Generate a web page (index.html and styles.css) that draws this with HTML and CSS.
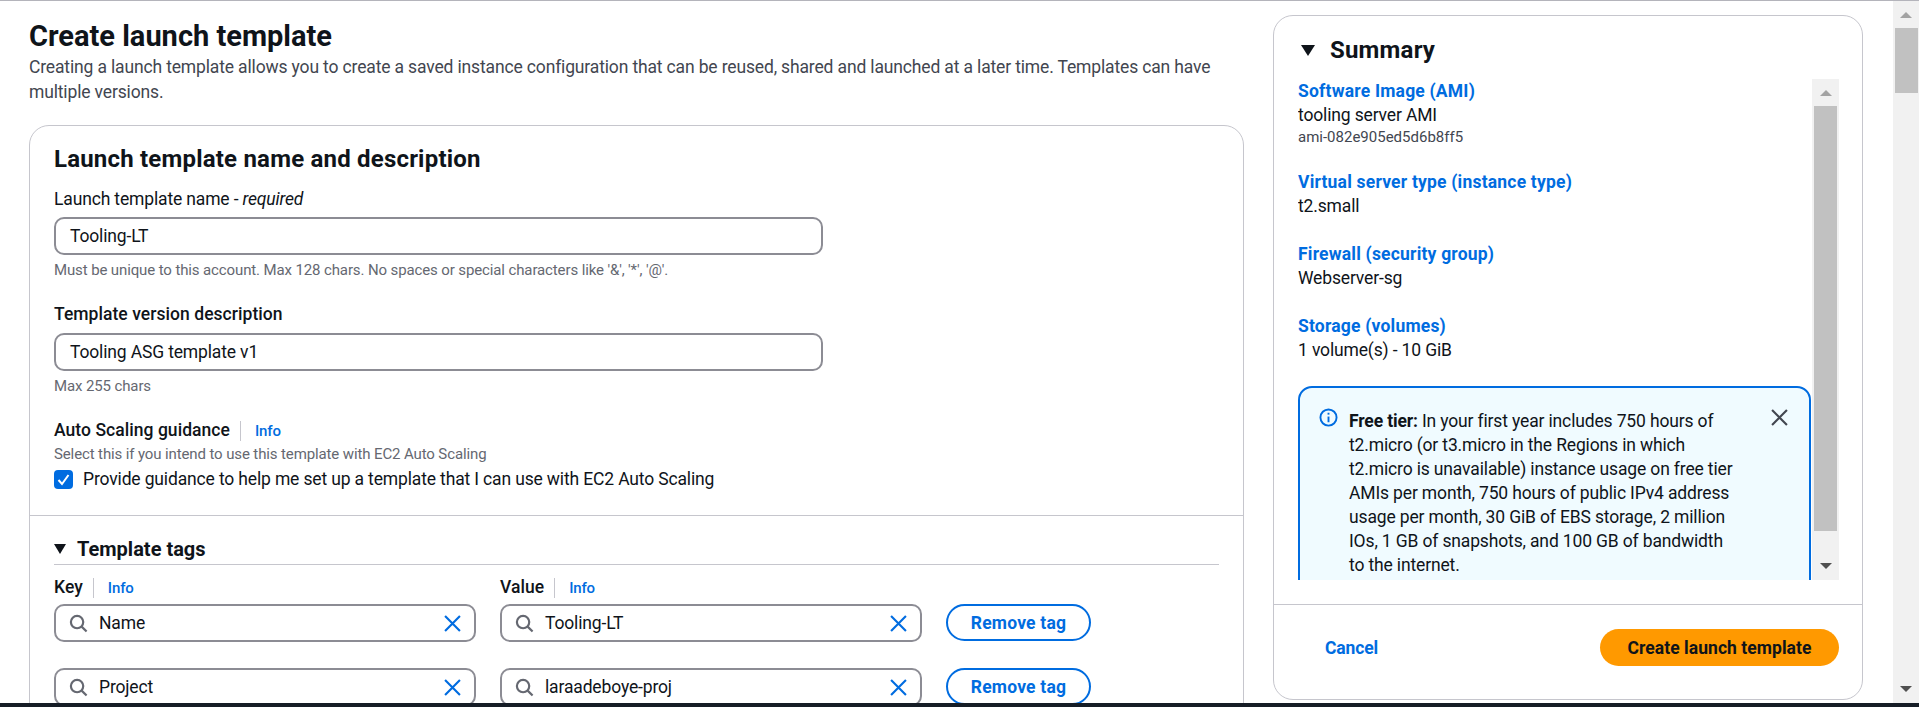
FILE: index.html
```html
<!DOCTYPE html>
<html lang="en">
<head>
  <meta charset="UTF-8">
  <title>Create launch template</title>
  <link rel="stylesheet" href="styles.css">
</head>
<body>
  <div class="viewport">
    <div class="content">
      <div class="main-col">
        <h1>Create launch template</h1>
        <p class="intro">Creating a launch template allows you to create a saved instance configuration that can be reused, shared and launched at a later time. Templates can have<br>multiple versions.</p>

        <div class="card">
          <div class="section">
            <h2>Launch template name and description</h2>
            <div class="label label-first">Launch template name - <i>required</i></div>
            <div class="input input-wide">Tooling-LT</div>
            <div class="hint">Must be unique to this account. Max 128 chars. No spaces or special characters like '&amp;', '*', '@'.</div>

            <div class="label label-strong label-gap">Template version description</div>
            <div class="input input-wide">Tooling ASG template v1</div>
            <div class="hint">Max 255 chars</div>

            <div class="label-row label-gap">
              <span class="label label-strong">Auto Scaling guidance</span>
              <a class="info">Info</a>
            </div>
            <div class="hint hint-tight">Select this if you intend to use this template with EC2 Auto Scaling</div>
            <div class="check-row">
              <svg class="checkbox" viewBox="0 0 19 19"><rect width="19" height="19" rx="4" fill="#006ce0"/><path d="M4.5 10l3.5 4 6.5-9" fill="none" stroke="#fff" stroke-width="2"/></svg>
              <span>Provide guidance to help me set up a template that I can use with EC2 Auto Scaling</span>
            </div>
          </div>

          <div class="section section-tags">
            <div class="tags-head">
              <svg class="caret" viewBox="0 0 12 10"><path d="M0 0h12L6 10z" fill="#0f141a"/></svg>
              <span>Template tags</span>
            </div>
            <div class="tag-grid tag-labels">
              <div class="label-row"><span class="label label-strong">Key</span><a class="info">Info</a></div>
              <div class="label-row"><span class="label label-strong">Value</span><a class="info">Info</a></div>
            </div>
            <div class="tag-grid">
              <div class="input input-search">
                <svg class="icon-search" viewBox="0 0 20 20"><circle cx="8.5" cy="8.5" r="6.5" fill="none" stroke="#656871" stroke-width="2.3"/><path d="M13.3 13.3L18.5 18.5" stroke="#656871" stroke-width="2.3"/></svg>
                <span class="input-text">Name</span>
                <svg class="icon-x" viewBox="0 0 16 16"><path d="M1 1l14 14M15 1L1 15" stroke="#006ce0" stroke-width="2"/></svg>
              </div>
              <div class="input input-search">
                <svg class="icon-search" viewBox="0 0 20 20"><circle cx="8.5" cy="8.5" r="6.5" fill="none" stroke="#656871" stroke-width="2.3"/><path d="M13.3 13.3L18.5 18.5" stroke="#656871" stroke-width="2.3"/></svg>
                <span class="input-text">Tooling-LT</span>
                <svg class="icon-x" viewBox="0 0 16 16"><path d="M1 1l14 14M15 1L1 15" stroke="#006ce0" stroke-width="2"/></svg>
              </div>
              <button class="btn-outline">Remove tag</button>

              <div class="input input-search">
                <svg class="icon-search" viewBox="0 0 20 20"><circle cx="8.5" cy="8.5" r="6.5" fill="none" stroke="#656871" stroke-width="2.3"/><path d="M13.3 13.3L18.5 18.5" stroke="#656871" stroke-width="2.3"/></svg>
                <span class="input-text">Project</span>
                <svg class="icon-x" viewBox="0 0 16 16"><path d="M1 1l14 14M15 1L1 15" stroke="#006ce0" stroke-width="2"/></svg>
              </div>
              <div class="input input-search">
                <svg class="icon-search" viewBox="0 0 20 20"><circle cx="8.5" cy="8.5" r="6.5" fill="none" stroke="#656871" stroke-width="2.3"/><path d="M13.3 13.3L18.5 18.5" stroke="#656871" stroke-width="2.3"/></svg>
                <span class="input-text">laraadeboye-proj</span>
                <svg class="icon-x" viewBox="0 0 16 16"><path d="M1 1l14 14M15 1L1 15" stroke="#006ce0" stroke-width="2"/></svg>
              </div>
              <button class="btn-outline">Remove tag</button>
            </div>
          </div>
        </div>
      </div>

      <aside class="summary">
        <div class="summary-head">
          <svg class="caret caret-big" viewBox="0 0 14 11"><path d="M0 0h14L7 11z" fill="#0f141a"/></svg>
          <span>Summary</span>
        </div>
        <div class="summary-scroll">
          <div class="summary-body">
            <a class="sum-link">Software Image (AMI)</a>
            <div class="sum-value">tooling server AMI</div>
            <div class="sum-id">ami-082e905ed5d6b8ff5</div>

            <a class="sum-link sum-gap-first">Virtual server type (instance type)</a>
            <div class="sum-value">t2.small</div>

            <a class="sum-link sum-gap">Firewall (security group)</a>
            <div class="sum-value">Webserver-sg</div>

            <a class="sum-link sum-gap">Storage (volumes)</a>
            <div class="sum-value">1 volume(s) - 10 GiB</div>

            <div class="alert">
              <svg class="alert-icon" viewBox="0 0 20 20"><circle cx="10" cy="10" r="8.5" fill="none" stroke="#006ce0" stroke-width="2"/><path d="M10 9v6" stroke="#006ce0" stroke-width="2"/><path d="M10 5v2" stroke="#006ce0" stroke-width="2"/></svg>
              <div class="alert-text"><b>Free tier:</b> In your first year includes 750 hours of<br>t2.micro (or t3.micro in the Regions in which<br>t2.micro is unavailable) instance usage on free tier<br>AMIs per month, 750 hours of public IPv4 address<br>usage per month, 30 GiB of EBS storage, 2 million<br>IOs, 1 GB of snapshots, and 100 GB of bandwidth<br>to the internet.</div>
              <svg class="alert-close" viewBox="0 0 16 16"><path d="M1 1l14 14M15 1L1 15" stroke="#424650" stroke-width="2"/></svg>
            </div>
          </div>
          <div class="scrollbar scrollbar-inner">
            <div class="arrow-up"></div>
            <div class="thumb thumb-inner"></div>
            <div class="arrow-down"></div>
          </div>
        </div>
        <div class="summary-foot">
          <a class="cancel">Cancel</a>
          <button class="btn-primary">Create launch template</button>
        </div>
      </aside>
    </div>

    <div class="scrollbar scrollbar-page">
      <div class="arrow-up"></div>
      <div class="thumb thumb-page"></div>
      <div class="arrow-down"></div>
    </div>
  </div>
  <div class="bottom-bar"></div>
</body>
</html>
```

FILE: styles.css
```css
* {
  box-sizing: border-box;
}
html, body {
  margin: 0;
  height: 707px;
  overflow: hidden;
}
body {
  display: flex;
  flex-direction: column;
  font-family: Roboto, "Noto Sans", sans-serif;
  font-size: 17.5px;
  line-height: 24px;
  letter-spacing: -0.15px;
  color: #0f141a;
  background-color: #fff;
  border-top: 1px solid #b4b4bb;
}
.viewport {
  flex: 1;
  display: flex;
  min-height: 0;
}
.bottom-bar {
  height: 4px;
  flex: none;
  background-color: #161d26;
}
.content {
  flex: 1;
  display: grid;
  grid-template-columns: 1215px 590px;
  gap: 29px;
  padding: 14px 30px 0 29px;
  min-width: 0;
  overflow: hidden;
  align-items: start;
}

/* left column */
.main-col {
  padding-top: 2px;
}
h1 {
  margin: 0;
  font-size: 29px;
  line-height: 38px;
  font-weight: 700;
  letter-spacing: 0;
}
.intro {
  margin: 0 0 20px;
  line-height: 25px;
  color: #424650;
}
.card {
  border: 1px solid #c6c6cd;
  border-radius: 20px;
  background-color: #fff;
}
.section {
  padding: 19px 24px 24px;
  border-bottom: 1px solid #c6c6cd;
}
h2 {
  margin: 0;
  font-size: 24px;
  line-height: 28px;
  font-weight: 700;
  letter-spacing: 0.2px;
}
.label {
  line-height: 25px;
}
.label-first {
  margin-top: 14px;
}
.label-first + .input {
  margin-top: 5px;
}
.label-strong {
  font-weight: 500;
  letter-spacing: 0.05px;
}
.label-gap {
  margin-top: 22px;
}
.label-row {
  display: flex;
  align-items: center;
  height: 25px;
}
.info {
  margin-left: 10px;
  padding-left: 14px;
  border-left: 1px solid #c6c6cd;
  font-size: 15px;
  line-height: 20px;
  font-weight: 500;
  color: #006ce0;
}
.input {
  display: flex;
  align-items: center;
  height: 38px;
  margin-top: 6px;
  padding: 0 14px;
  border: 2px solid #8c8c94;
  border-radius: 10px;
  background-color: #fff;
}
.input-wide {
  width: 769px;
}
.hint {
  margin-top: 5px;
  font-size: 15px;
  line-height: 20px;
  letter-spacing: -0.12px;
  color: #656871;
}
.hint-tight {
  margin-top: 1px;
}
.check-row {
  display: flex;
  align-items: center;
  gap: 10px;
  margin-top: 3px;
}
.checkbox {
  width: 19px;
  height: 19px;
  flex: none;
}

/* tags */
.section-tags {
  border-bottom: 0;
  padding-bottom: 24px;
}
.tags-head {
  display: flex;
  align-items: center;
  gap: 11px;
  height: 30px;
  padding-bottom: 2px;
  border-bottom: 1px solid #c6c6cd;
  font-size: 20px;
  font-weight: 700;
  letter-spacing: 0;
}
.caret {
  width: 12px;
  height: 10px;
  flex: none;
}
.tag-grid {
  display: grid;
  grid-template-columns: 422px 422px 145px;
  column-gap: 24px;
  row-gap: 26px;
}
.tag-labels {
  margin-top: 10px;
  margin-bottom: 4px;
}
.tag-grid .input {
  margin-top: 0;
}
.input-search {
  padding: 0 13px 0 13px;
}
.icon-search {
  width: 19px;
  height: 19px;
  flex: none;
}
.input-text {
  flex: 1;
  margin-left: 11px;
}
.icon-x {
  width: 17px;
  height: 17px;
  flex: none;
}
.btn-outline {
  height: 37px;
  padding: 0;
  border: 2px solid #006ce0;
  border-radius: 20px;
  background-color: #fff;
  color: #006ce0;
  font: inherit;
  font-weight: 700;
  letter-spacing: 0.2px;
}

/* summary panel */
.summary {
  height: 685px;
  border: 1px solid #c6c6cd;
  border-radius: 20px;
  background-color: #fff;
}
.summary-head {
  display: flex;
  align-items: center;
  gap: 15px;
  height: 28px;
  margin: 20px 0 15px 27px;
  font-size: 24px;
  font-weight: 700;
  letter-spacing: 0.2px;
}
.caret-big {
  width: 14px;
  height: 11px;
}
.summary-scroll {
  display: flex;
  height: 501px;
  margin: 0 23px 0 24px;
}
.summary-body {
  flex: 1;
  min-width: 0;
  overflow: hidden;
}
.sum-link {
  display: block;
  line-height: 24px;
  font-weight: 700;
  letter-spacing: 0.2px;
  color: #006ce0;
}
.sum-gap-first {
  margin-top: 23px;
}
.sum-gap {
  margin-top: 24px;
}
.sum-value {
  line-height: 24px;
}
.sum-id {
  font-size: 15px;
  line-height: 20px;
  letter-spacing: 0;
  color: #424650;
}
.alert {
  display: flex;
  align-items: flex-start;
  margin: 24px 1px 0 0;
  height: 300px;
  padding: 21px 0 0 19px;
  border: 2px solid #006ce0;
  border-radius: 14px;
  background-color: #f0fbff;
}
.alert-icon {
  width: 19px;
  height: 19px;
  flex: none;
  margin-top: -1px;
}
.alert-text {
  flex: 1;
  margin-left: 11px;
}
.alert-text b {
  font-weight: 700;
}
.alert-close {
  width: 17px;
  height: 17px;
  flex: none;
  margin: 0 21px 0 0;
}
.summary-foot {
  display: flex;
  align-items: center;
  justify-content: space-between;
  margin-top: 24px;
  padding: 24px 23px 0 51px;
  border-top: 1px solid #c6c6cd;
}
.cancel {
  color: #006ce0;
  font-weight: 700;
}
.btn-primary {
  width: 239px;
  height: 37px;
  padding: 0;
  border: 0;
  border-radius: 20px;
  background-color: #ff9900;
  color: #0f141a;
  font: inherit;
  font-weight: 700;
  letter-spacing: 0.05px;
}

/* scrollbars */
.scrollbar {
  display: flex;
  flex-direction: column;
  align-items: center;
  background-color: #f1f1f1;
  flex: none;
}
.scrollbar-page {
  width: 26px;
}
.scrollbar-inner {
  width: 27px;
}
.thumb {
  width: 23px;
  background-color: #c1c1c1;
}
.thumb-page {
  height: 65px;
  margin-top: 10px;
}
.thumb-inner {
  height: 425px;
  margin-top: 10px;
}
.arrow-up, .arrow-down {
  width: 0;
  height: 0;
  border-left: 6px solid transparent;
  border-right: 6px solid transparent;
}
.arrow-up {
  margin-top: 11px;
  border-bottom: 6px solid #a3a3a3;
}
.arrow-down {
  margin-top: auto;
  margin-bottom: 11px;
  border-top: 6px solid #505050;
}
```
